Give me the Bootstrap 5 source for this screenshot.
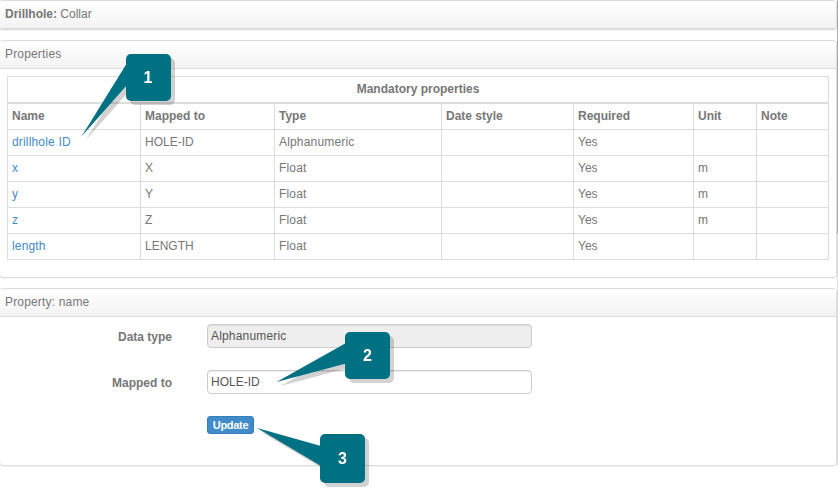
<!DOCTYPE html>
<html lang="en">
<head>
<meta charset="utf-8">
<title>Drillhole: Collar</title>
<link href="https://cdn.jsdelivr.net/npm/bootstrap@5.3.0/dist/css/bootstrap.min.css" rel="stylesheet">
<style>
body{font:12px/17px "Liberation Sans",Arial,sans-serif;color:#777;width:838px;height:497px;overflow:hidden;background:#fff}
.page{width:838px;height:497px}
.panels{width:838px;margin-left:-1px;gap:10px}
.panel{--bs-card-border-color:#ddd;--bs-card-border-radius:4px;--bs-card-inner-border-radius:3px;--bs-card-cap-padding-x:5px;--bs-card-cap-padding-y:0;--bs-card-color:#777;box-shadow:0 1px 1px rgba(0,0,0,.05)}
.panel>.card-header{height:28px;line-height:26px;background:linear-gradient(#fff,#f3f3f3);border-bottom:1px solid #ddd}
.panel-title{height:30px}.panel-props{height:238px}.panel-edit{height:178px}
.table-area{padding:7px}
.props{width:822px;table-layout:fixed;--bs-table-color:#777;color:#777;border-collapse:separate;border-spacing:0;border:solid #ddd;border-width:1px 0 0 1px}
.props>:not(caption)>*{border:0}
.props>:not(caption)>*>*{height:26px;padding:0 4px;line-height:24px;border:solid #ddd;border-width:0 1px 1px 0;vertical-align:top}
.props>thead>tr:first-child>th{height:27px;border-bottom-width:2px}
.props a{color:#428bca}
.loose{letter-spacing:.17px}
.edit-form{padding:7px 0 0}
.edit-row{gap:35px;height:46px;align-items:flex-start}
.edit-label{width:172px;line-height:26px}
.edit-input{width:325px;height:24px;padding:0 3px;line-height:22px;font-size:12px;color:#555;border-color:#ccc;border-radius:4px;box-shadow:inset 0 1px 1px rgba(0,0,0,.075)}
.edit-input:disabled{background:#eee}
.btn-update{width:47px;height:18px;padding:0;font-size:11px;line-height:16px;letter-spacing:-.3px;background:#428bca;border-color:#357ebd;border-radius:3px}
.scroll-track{width:1px;height:466px;right:0;top:0;background:linear-gradient(#aaa 0 234px,#ddd 234px)}
.callouts{left:0;top:0;pointer-events:none}
.callouts text{font-weight:700;font-size:16px;fill:#fff;text-anchor:middle}
</style>
<script src="https://cdn.jsdelivr.net/npm/bootstrap@5.3.0/dist/js/bootstrap.bundle.min.js"></script>
</head>
<body>
<div class="page position-relative overflow-hidden">
<main class="panels d-flex flex-column">
<section class="card panel panel-title"><div class="card-header"><strong>Drillhole:</strong> Collar</div></section>
<section class="card panel panel-props">
<div class="card-header loose">Properties</div>
<div class="card-body table-area">
<table class="table props mb-0">
<colgroup><col style="width:133px"><col style="width:134px"><col style="width:167px"><col style="width:132px"><col style="width:120px"><col style="width:63px"><col style="width:72px"></colgroup>
<thead>
<tr><th colspan="7" class="text-center">Mandatory properties</th></tr>
<tr><th>Name</th><th>Mapped to</th><th>Type</th><th>Date style</th><th>Required</th><th>Unit</th><th>Note</th></tr>
</thead>
<tbody>
<tr><td><a href="#" class="text-decoration-none loose">drillhole ID</a></td><td>HOLE-ID</td><td class="loose">Alphanumeric</td><td></td><td>Yes</td><td></td><td></td></tr>
<tr><td><a href="#" class="text-decoration-none">x</a></td><td>X</td><td class="loose">Float</td><td></td><td>Yes</td><td>m</td><td></td></tr>
<tr><td><a href="#" class="text-decoration-none">y</a></td><td>Y</td><td class="loose">Float</td><td></td><td>Yes</td><td>m</td><td></td></tr>
<tr><td><a href="#" class="text-decoration-none">z</a></td><td>Z</td><td class="loose">Float</td><td></td><td>Yes</td><td>m</td><td></td></tr>
<tr><td><a href="#" class="text-decoration-none loose">length</a></td><td>LENGTH</td><td class="loose">Float</td><td></td><td>Yes</td><td></td><td></td></tr>
</tbody>
</table>
</div>
</section>
<section class="card panel panel-edit">
<div class="card-header loose">Property: name</div>
<form class="card-body edit-form">
<div class="d-flex edit-row"><label class="edit-label text-end fw-bold" for="dtype">Data type</label><input id="dtype" class="form-control edit-input loose" value="Alphanumeric" disabled></div>
<div class="d-flex edit-row"><label class="edit-label text-end fw-bold" for="mapped">Mapped to</label><input id="mapped" class="form-control edit-input" value="HOLE-ID"></div>
<div class="d-flex edit-row"><span class="edit-label"></span><button type="button" class="btn btn-primary btn-update fw-bold">Update</button></div>
</form>
</section>
</main>
<div class="scroll-track position-absolute"></div>
<svg class="callouts position-absolute" width="838" height="497" viewBox="0 0 838 497">
<defs>
<g id="c1"><rect x="126" y="54" width="45" height="47" rx="5"/><path d="M127 63L81.500 136.500L127 85Z"/></g>
<g id="c2"><rect x="345" y="332" width="45" height="47" rx="5"/><path d="M346 343L276.500 382L346 363.500Z"/></g>
<g id="c3"><rect x="320" y="434" width="45" height="49" rx="5"/><path d="M321 446L257 428L321 466Z"/></g>
</defs>
<g opacity=".18"><use href="#c1" x="4" y="4"/><use href="#c2" x="4" y="4"/><use href="#c3" x="4" y="4"/></g>
<g fill="#007083"><use href="#c1"/><use href="#c2"/><use href="#c3"/></g>
<text x="148" y="83">1</text><text x="367.500" y="361">2</text><text x="342.500" y="464">3</text>
</svg>
</div>
</body>
</html>
